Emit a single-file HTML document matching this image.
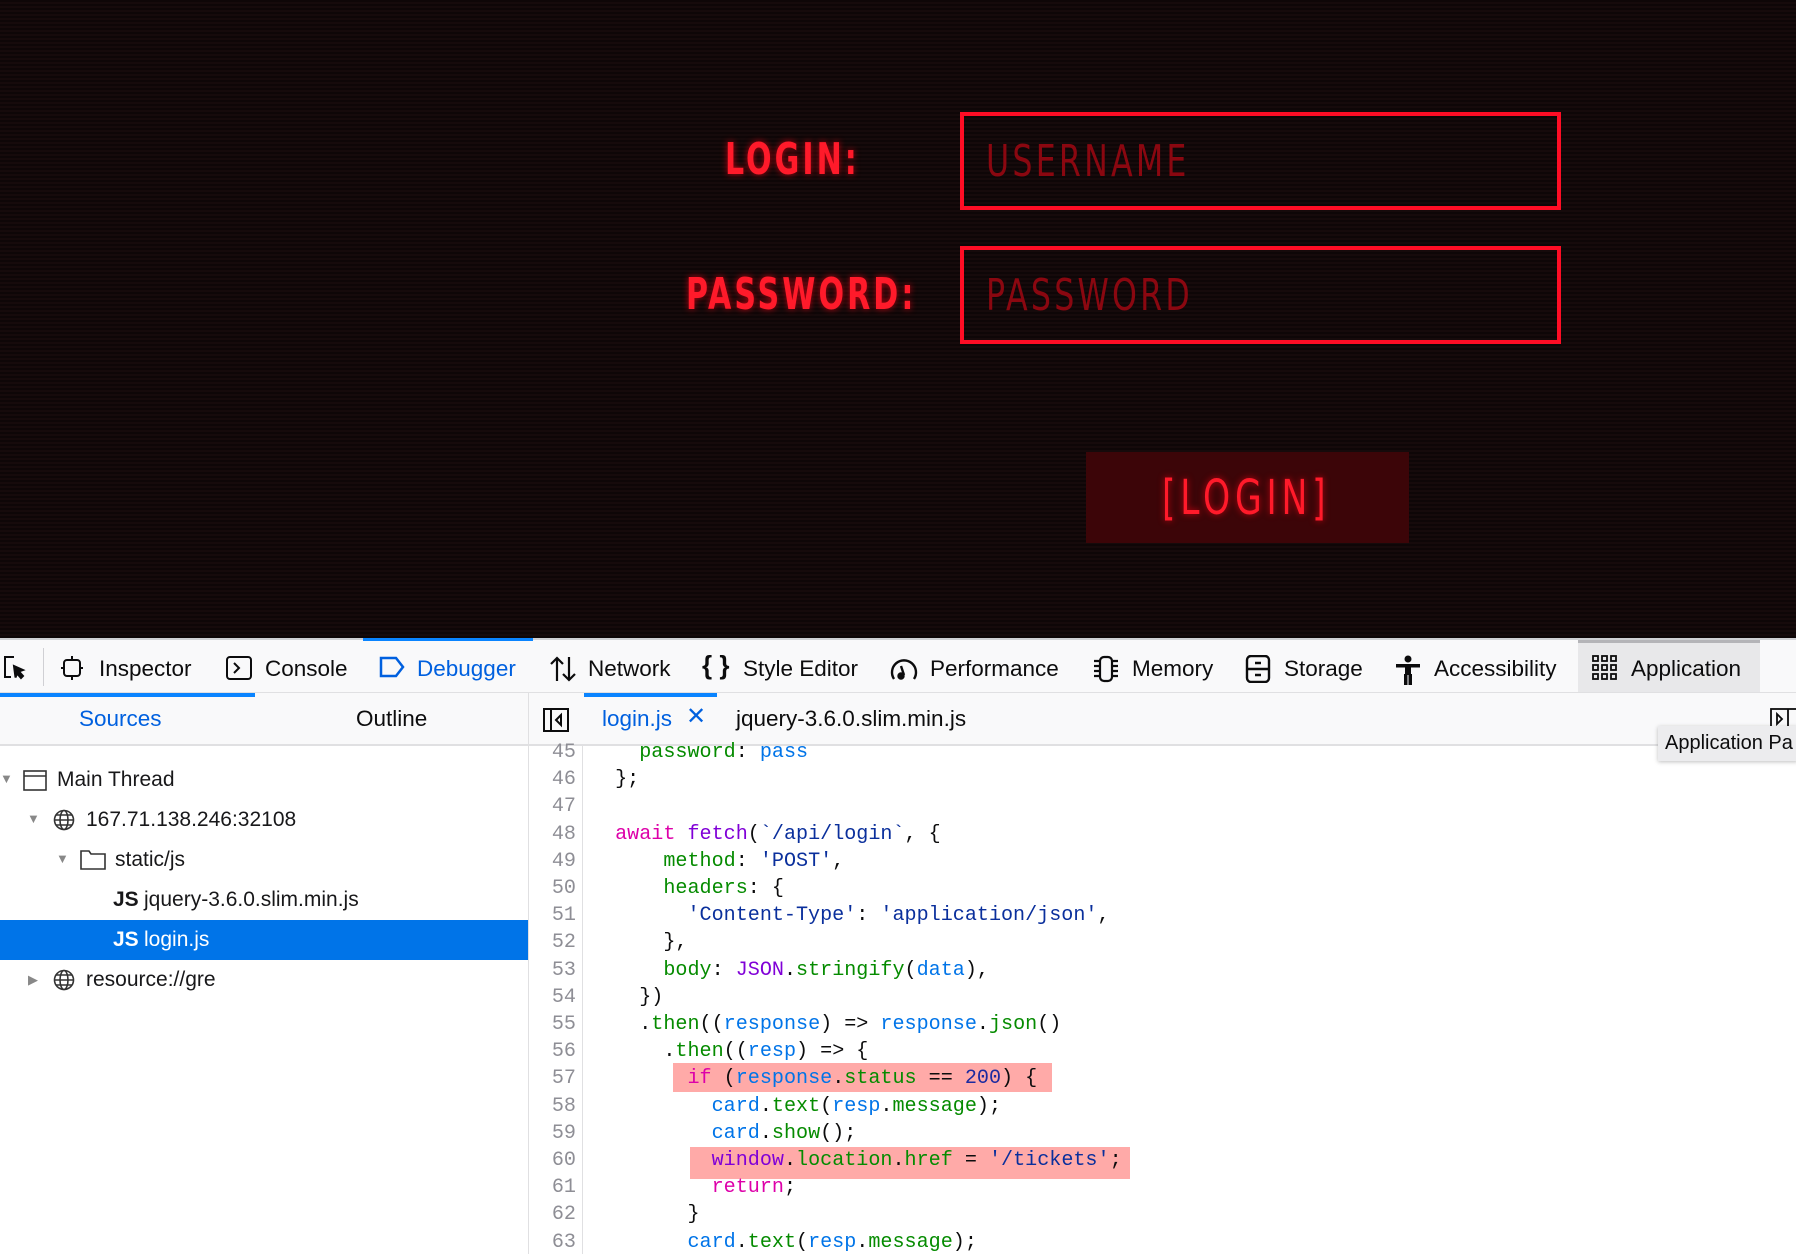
<!DOCTYPE html>
<html><head><meta charset="utf-8"><style>
*{margin:0;padding:0;box-sizing:border-box}
body{width:1796px;height:1254px;overflow:hidden;background:#fff;font-family:"Liberation Sans",sans-serif;position:relative}
.abs{position:absolute}
#top{left:0;top:0;width:1796px;height:638px;background:#0e0607;background-image:repeating-linear-gradient(#0e0607 0 2px,#160a0b 2px 4px)}
.lbl{position:absolute;font-family:"DejaVu Sans Condensed","Liberation Sans Narrow","Liberation Sans",sans-serif;font-weight:bold;color:#ff1a2a;font-size:44px;letter-spacing:4px;text-shadow:0 0 8px rgba(255,0,20,.7);transform:scaleX(.76);transform-origin:left center;line-height:1}
.box{position:absolute;border:4px solid #ff0d25;left:960px;width:601px}
.ph{position:absolute;left:22px;top:24px;font-family:"DejaVu Sans Condensed","Liberation Sans",sans-serif;font-size:44px;color:#8a0710;letter-spacing:4px;transform:scaleX(.8);transform-origin:left center;line-height:1}
#tb{left:0;top:638px;width:1796px;height:55px;background:#f9f9fa;border-top:2px solid #d0d0d4;border-bottom:1px solid #e0e0e2}
.t{position:absolute;top:17px;font-size:22.5px;color:#0c0c0d;line-height:24px}
.ic{position:absolute;top:15px}
#sub{left:0;top:693px;width:1796px;height:53px;background:#f9f9fa;border-bottom:2px solid #e0e0e2}
.tree{position:absolute;font-size:21px;color:#18181a;line-height:24px}
pre{font-family:"Liberation Mono",monospace;font-size:20.1px;line-height:27.2px;position:absolute}
.k{color:#dd00a9}.f{color:#8000d7}.s{color:#0a2f9c}.p{color:#058b00}.i{color:#0074e8}.n{color:#1c2aa0}.w{color:#8000d7}
</style></head><body>
<div id="top" class="abs">
<div class="lbl" style="left:725px;top:138px">LOGIN:</div>
<div class="lbl" style="left:686px;top:273px">PASSWORD:</div>
<div class="box" style="top:112px;height:98px"><div class="ph">USERNAME</div></div>
<div class="box" style="top:246px;height:98px"><div class="ph">PASSWORD</div></div>
<div class="abs" style="left:1086px;top:452px;width:323px;height:91px;background:#3c0508"></div>
<div class="lbl" style="left:1162px;top:474px;font-weight:normal;font-size:48px;letter-spacing:6px;transform:scaleX(.8)">[LOGIN]</div>
</div>

<div id="tb" class="abs">
<svg class="ic" style="left:2px" width="26" height="26" viewBox="0 0 26 26" fill="none" stroke="#0c0c0d" stroke-width="2"><path d="M12 2H3v20h6"/><path d="M12 11l9 4-4 1.5 4 4.5-2 2-4-4.5-1.5 4z" fill="#0c0c0d"/></svg>
<div class="abs" style="left:43px;top:8px;width:1px;height:38px;background:#d0d0d4"></div>
<svg class="ic" style="left:60px" width="24" height="26" viewBox="0 0 24 26" fill="none" stroke="#0c0c0d" stroke-width="2"><rect x="4" y="5" width="16" height="16" rx="3"/><path d="M12 1v4M12 21v4M1 13h3M20 13h3"/></svg>
<div class="t" style="left:99px">Inspector</div>
<svg class="ic" style="left:226px" width="26" height="26" viewBox="0 0 26 26" fill="none" stroke="#0c0c0d" stroke-width="2"><rect x="1" y="2" width="24" height="22" rx="3"/><path d="M8 8l5 5-5 5"/></svg>
<div class="t" style="left:265px">Console</div>
<div class="abs" style="left:363px;top:-2px;width:170px;height:3px;background:#0a84ff"></div>
<svg class="ic" style="left:378px" width="28" height="24" viewBox="0 0 28 24" fill="none" stroke="#0060df" stroke-width="2.5"><path d="M3 3h15l7 9-7 9H3z"/></svg>
<div class="t" style="left:417px;color:#0060df">Debugger</div>
<svg class="ic" style="left:549px" width="28" height="28" viewBox="0 0 28 28" fill="none" stroke="#0c0c0d" stroke-width="2.2"><path d="M8 26V3M2 9l6-6 6 6M20 2v23M14 19l6 6 6-6"/></svg>
<div class="t" style="left:588px">Network</div>
<div class="t" style="left:702px;top:13px;font-size:26px;font-weight:bold">{ }</div>
<div class="t" style="left:743px">Style Editor</div>
<svg class="ic" style="left:889px" width="30" height="28" viewBox="0 0 30 28" fill="none" stroke="#0c0c0d" stroke-width="2.4"><path d="M5 24A12 12 0 1 1 25 24"/><path d="M15 20l-3-9"/><circle cx="12" cy="21" r="2.5" fill="#0c0c0d"/></svg>
<div class="t" style="left:930px">Performance</div>
<svg class="ic" style="left:1092px" width="28" height="28" viewBox="0 0 28 28" fill="none" stroke="#0c0c0d" stroke-width="2.2"><rect x="8" y="2" width="12" height="24" rx="4"/><path d="M2 6h5M2 11h5M2 16h5M2 21h5M21 6h5M21 11h5M21 16h5M21 21h5"/></svg>
<div class="t" style="left:1132px">Memory</div>
<svg class="ic" style="left:1245px" width="26" height="28" viewBox="0 0 26 28" fill="none" stroke="#0c0c0d" stroke-width="2.4"><rect x="2" y="1" width="22" height="26" rx="4"/><path d="M2 14h22M10 8h6M10 20h6"/></svg>
<div class="t" style="left:1284px">Storage</div>
<svg class="ic" style="left:1395px" width="26" height="30" viewBox="0 0 26 30" fill="#0c0c0d"><circle cx="13" cy="4" r="3.5"/><rect x="1" y="9" width="24" height="3.5"/><rect x="10" y="9" width="6" height="11"/><rect x="9" y="19" width="3.5" height="11"/><rect x="13.5" y="19" width="3.5" height="11"/></svg>
<div class="t" style="left:1434px">Accessibility</div>
<div class="abs" style="left:1578px;top:0;width:182px;height:52px;background:#e8e8ea;border-top:3px solid #b4b4b8"></div>
<svg class="ic" style="left:1592px" width="26" height="26" viewBox="0 0 26 26" fill="none" stroke="#0c0c0d" stroke-width="1.8"><rect x="1" y="1" width="5" height="5"/><rect x="10" y="1" width="5" height="5"/><rect x="19" y="1" width="5" height="5"/><rect x="1" y="10" width="5" height="5"/><rect x="10" y="10" width="5" height="5"/><rect x="19" y="10" width="5" height="5"/><rect x="1" y="19" width="5" height="5"/><rect x="10" y="19" width="5" height="5"/><rect x="19" y="19" width="5" height="5"/></svg>
<div class="t" style="left:1631px">Application</div>
</div>

<div id="sub" class="abs">
<div class="abs" style="left:0;top:0;width:255px;height:4px;background:#0a84ff"></div>
<div class="t" style="left:79px;top:14px;color:#0060df">Sources</div>
<div class="t" style="left:356px;top:14px">Outline</div>
<div class="abs" style="left:528px;top:0;width:1px;height:53px;background:#e0e0e2"></div>
<svg class="abs" style="left:543px;top:15px" width="26" height="24" viewBox="0 0 26 24" fill="none" stroke="#0c0c0d" stroke-width="2"><rect x="1" y="1" width="24" height="22"/><path d="M8 1v22M18 7l-5 5 5 5z"/></svg>
<div class="abs" style="left:584px;top:0;width:133px;height:4px;background:#0a84ff"></div>
<div class="t" style="left:602px;top:14px;color:#0060df">login.js</div>
<div class="t" style="left:686px;top:12px;color:#0060df;font-size:24px">✕</div>
<div class="t" style="left:736px;top:14px">jquery-3.6.0.slim.min.js</div>
<svg class="abs" style="left:1770px;top:15px" width="26" height="22" viewBox="0 0 26 22" fill="none" stroke="#0c0c0d" stroke-width="1.8"><rect x="1" y="1" width="30" height="20"/><path d="M7 6l5 5-5 5z"/><path d="M18 1v20"/></svg>
</div>
<div class="abs" style="left:1658px;top:726px;width:140px;height:35px;background:#ececee;box-shadow:0 1px 4px rgba(0,0,0,.25);font-size:20px;padding:6px 0 0 7px;color:#0c0c0d;white-space:nowrap;overflow:hidden">Application Pa</div>

<div class="abs" style="left:528px;top:746px;width:1px;height:508px;background:#e0e0e2"></div>
<div class="tree" style="left:0;top:767px;font-size:13px;color:#888">▼</div>
<svg class="abs" style="left:23px;top:770px" width="24" height="21" viewBox="0 0 24 21" fill="none" stroke="#333" stroke-width="1.6"><rect x="1" y="1" width="22" height="19"/><path d="M1 6h22"/></svg>
<div class="tree" style="left:57px;top:768px">Main Thread</div>
<div class="tree" style="left:27px;top:807px;font-size:13px;color:#888">▼</div>
<svg class="abs" style="left:53px;top:809px" width="22" height="22" viewBox="0 0 22 22" fill="none" stroke="#333" stroke-width="1.6"><circle cx="11" cy="11" r="9.5"/><ellipse cx="11" cy="11" rx="4" ry="9.5"/><path d="M1.5 11h19M3 6h16M3 16h16"/></svg>
<div class="tree" style="left:86px;top:808px">167.71.138.246:32108</div>
<div class="tree" style="left:56px;top:847px;font-size:13px;color:#888">▼</div>
<svg class="abs" style="left:80px;top:849px" width="26" height="21" viewBox="0 0 26 21" fill="none" stroke="#333" stroke-width="1.6"><path d="M1 2h8l2 3h14v15H1z"/></svg>
<div class="tree" style="left:115px;top:848px">static/js</div>
<div class="tree" style="left:113px;top:888px;font-weight:bold">JS</div>
<div class="tree" style="left:144px;top:888px">jquery-3.6.0.slim.min.js</div>
<div class="abs" style="left:0;top:920px;width:528px;height:40px;background:#0074e8"></div>
<div class="tree" style="left:113px;top:928px;font-weight:bold;color:#fff">JS</div>
<div class="tree" style="left:144px;top:928px;color:#fff">login.js</div>
<div class="tree" style="left:28px;top:968px;font-size:13px;color:#888">▶</div>
<svg class="abs" style="left:53px;top:969px" width="22" height="22" viewBox="0 0 22 22" fill="none" stroke="#333" stroke-width="1.6"><circle cx="11" cy="11" r="9.5"/><ellipse cx="11" cy="11" rx="4" ry="9.5"/><path d="M1.5 11h19M3 6h16M3 16h16"/></svg>
<div class="tree" style="left:86px;top:968px">resource://gre</div>

<div class="abs" style="left:582px;top:746px;width:1px;height:508px;background:#e0e0e2"></div>
<div class="abs" style="left:673px;top:1063px;width:379px;height:29px;background:#ffaaa8"></div>
<div class="abs" style="left:690px;top:1147px;width:440px;height:32px;background:#ffaaa8"></div>
<pre style="left:548px;top:739px;color:#8e8e95;text-align:right;width:28px;line-height:27.2px">45
46
47
48
49
50
51
52
53
54
55
56
57
58
59
60
61
62
63</pre>
<pre style="left:591px;top:739px;color:#0c0c0d">    <span class="p">password</span>: <span class="i">pass</span>
  };

  <span class="k">await</span> <span class="f">fetch</span>(<span class="s">`/api/login`</span>, {
      <span class="p">method</span>: <span class="s">'POST'</span>,
      <span class="p">headers</span>: {
        <span class="s">'Content-Type'</span>: <span class="s">'application/json'</span>,
      },
      <span class="p">body</span>: <span class="w">JSON</span>.<span class="p">stringify</span>(<span class="i">data</span>),
    })
    .<span class="p">then</span>((<span class="i">response</span>) =&gt; <span class="i">response</span>.<span class="p">json</span>()
      .<span class="p">then</span>((<span class="i">resp</span>) =&gt; {
        <span class="k">if</span> (<span class="i">response</span>.<span class="p">status</span> == <span class="n">200</span>) {
          <span class="i">card</span>.<span class="p">text</span>(<span class="i">resp</span>.<span class="p">message</span>);
          <span class="i">card</span>.<span class="p">show</span>();
          <span class="w">window</span>.<span class="p">location</span>.<span class="p">href</span> = <span class="s">'/tickets'</span>;
          <span class="k">return</span>;
        }
        <span class="i">card</span>.<span class="p">text</span>(<span class="i">resp</span>.<span class="p">message</span>);</pre>
</body></html>
